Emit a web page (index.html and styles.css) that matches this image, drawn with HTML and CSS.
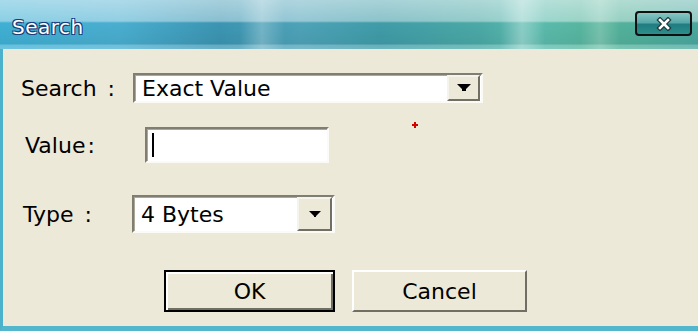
FILE: index.html
```html
<!DOCTYPE html>
<html lang="en">
<head>
    <meta charset="UTF-8">
    <title>Search</title>
    <link rel="stylesheet" href="styles.css">
</head>
<body>
    <div class="window">
        <div class="titlebar">
            <span class="title">Search</span>
            <button class="close-btn">
                <svg width="16" height="14" viewBox="0 0 16 14">
                    <path d="M4 3 L12 11 M12 3 L4 11" stroke="#1b3a3a" stroke-width="5" stroke-linecap="square"/>
                    <path d="M4 3 L12 11 M12 3 L4 11" stroke="#ffffff" stroke-width="2.6" stroke-linecap="square"/>
                </svg>
            </button>
        </div>

        <div class="content">
            <span class="marker"></span>

            <div class="row row-search">
                <span class="label label-search">Search<span class="colon">:</span></span>
                <div class="combo combo-search">
                    <span class="combo-text">Exact Value</span>
                    <span class="drop-btn">
                        <svg width="14" height="8" viewBox="0 0 14 8"><path d="M0 0 H14 L9 5 V7 H5 V5 Z" fill="#000"/></svg>
                    </span>
                </div>
            </div>

            <div class="row row-value">
                <span class="label label-value">Value<span class="colon tight">:</span></span>
                <div class="textbox">
                    <span class="caret"></span>
                </div>
            </div>

            <div class="row row-type">
                <span class="label label-type">Type<span class="colon">:</span></span>
                <div class="combo combo-type">
                    <span class="combo-text">4 Bytes</span>
                    <span class="drop-btn">
                        <svg width="12" height="7" viewBox="0 0 12 7"><path d="M0 0 H12 L7 5 V6 H5 V5 Z" fill="#000"/></svg>
                    </span>
                </div>
            </div>

            <div class="row row-buttons">
                <button class="btn btn-default">OK</button>
                <button class="btn btn-cancel">Cancel</button>
            </div>
        </div>
    </div>
</body>
</html>
```

FILE: styles.css
```css
body {
    margin: 0;
    padding: 0;
    font-family: "DejaVu Sans", sans-serif;
    background-color: #ece9d8;
}

.window {
    width: 698px;
    height: 331px;
    display: flex;
    flex-direction: column;
    overflow: hidden;
}

.titlebar {
    height: 49px;
    flex: none;
    display: flex;
    align-items: flex-start;
    justify-content: space-between;
    background:
        linear-gradient(to right, rgba(255,255,255,0) 240px, rgba(255,255,255,0.25) 262px, rgba(255,255,255,0) 285px,
            rgba(255,255,255,0) 500px, rgba(255,255,255,0.3) 522px, rgba(255,255,255,0) 545px,
            rgba(255,255,255,0) 580px, rgba(255,255,255,0.2) 600px, rgba(255,255,255,0) 620px),
        linear-gradient(to bottom, rgba(255,255,255,0.55) 0, rgba(255,255,255,0.4) 21px, rgba(255,255,255,0) 23px,
            rgba(0,0,0,0.05) 44px, rgba(255,255,255,0.2) 45px, rgba(255,255,255,0.25) 49px),
        linear-gradient(to right, #3fb0d4 0, #4aaed0 120px, #3b95b2 220px, #4ea3b8 300px, #3f9ca8 380px,
            #4ba9a6 480px, #5cbcb0 530px, #55b49a 600px, #4aa8a0 698px);
}

.title {
    margin: 15px 0 0 12px;
    font-size: 20px;
    color: #ffffff;
    letter-spacing: 0.5px;
    text-shadow: 1px 1px 0 #1c3c7a, -1px -1px 0 #1c3c7a, 1px -1px 0 #1c3c7a, -1px 1px 0 #1c3c7a;
}

.close-btn {
    margin: 11px 6px 0 0;
    width: 57px;
    height: 25px;
    padding: 0;
    border: 2px solid #111;
    border-radius: 4px;
    background: linear-gradient(to bottom, #86c8c4 0, #5aa8aa 45%, #1f7c80 55%, #2d8e8c 100%);
    display: flex;
    align-items: center;
    justify-content: center;
}

.content {
    flex: 1;
    position: relative;
    background-color: #ece9d8;
    border-left: 3px solid #4cb2cc;
    border-bottom: 5px solid #52b6cc;
    display: flex;
    flex-direction: column;
}

.marker {
    position: absolute;
    left: 409px;
    top: 73px;
    width: 6px;
    height: 6px;
    background:
        linear-gradient(#d40000, #d40000) center / 6px 2px no-repeat,
        linear-gradient(#d40000, #d40000) center / 2px 6px no-repeat;
}

.row {
    display: flex;
    align-items: center;
}

.label {
    font-size: 22px;
    color: #000;
    flex: none;
}

.colon {
    margin-left: 11px;
}

.colon.tight {
    margin-left: 2px;
}

.row-search {
    margin-top: 24px;
    height: 30px;
}

.label-search {
    width: 112px;
    padding-left: 18px;
}

.row-value {
    margin-top: 24px;
    height: 36px;
}

.label-value {
    width: 120px;
    padding-left: 22px;
}

.row-type {
    margin-top: 32px;
    height: 38px;
}

.label-type {
    width: 109px;
    padding-left: 20px;
}

.combo,
.textbox {
    box-sizing: border-box;
    height: 100%;
    background: #fff;
    border-style: solid;
    border-width: 2px;
    border-color: #807e70 #fbfaf5 #fbfaf5 #807e70;
    box-shadow: inset 1px 1px 0 #aca899;
    display: flex;
    align-items: center;
}

.combo-search {
    width: 350px;
}

.combo-type {
    width: 203px;
}

.combo-text {
    flex: 1;
    font-size: 22px;
    padding-left: 7px;
    color: #000;
}

.drop-btn {
    box-sizing: border-box;
    height: 100%;
    width: 33px;
    margin-right: 1px;
    background: #ece9d8;
    border-style: solid;
    border-width: 2px;
    border-color: #f5f4ec #716f64 #716f64 #f5f4ec;
    display: flex;
    align-items: center;
    justify-content: center;
}

.combo-type .drop-btn {
    width: 35px;
}

.textbox {
    width: 184px;
}

.caret {
    width: 2px;
    height: 24px;
    margin-left: 5px;
    background: #000;
}

.row-buttons {
    margin-top: 37px;
    padding-left: 161px;
    gap: 17px;
}

.btn {
    box-sizing: border-box;
    height: 42px;
    font-family: "DejaVu Sans", sans-serif;
    font-size: 22px;
    color: #000;
    background: #ece9d8;
    border-style: solid;
    border-width: 2px;
    border-color: #ffffff #716f64 #716f64 #ffffff;
    padding: 0;
}

.btn-default {
    width: 171px;
    border: 2px solid #000;
    box-shadow: inset 2px 2px 0 #ffffff, inset -2px -2px 0 #716f64;
}

.btn-cancel {
    width: 175px;
}
```
